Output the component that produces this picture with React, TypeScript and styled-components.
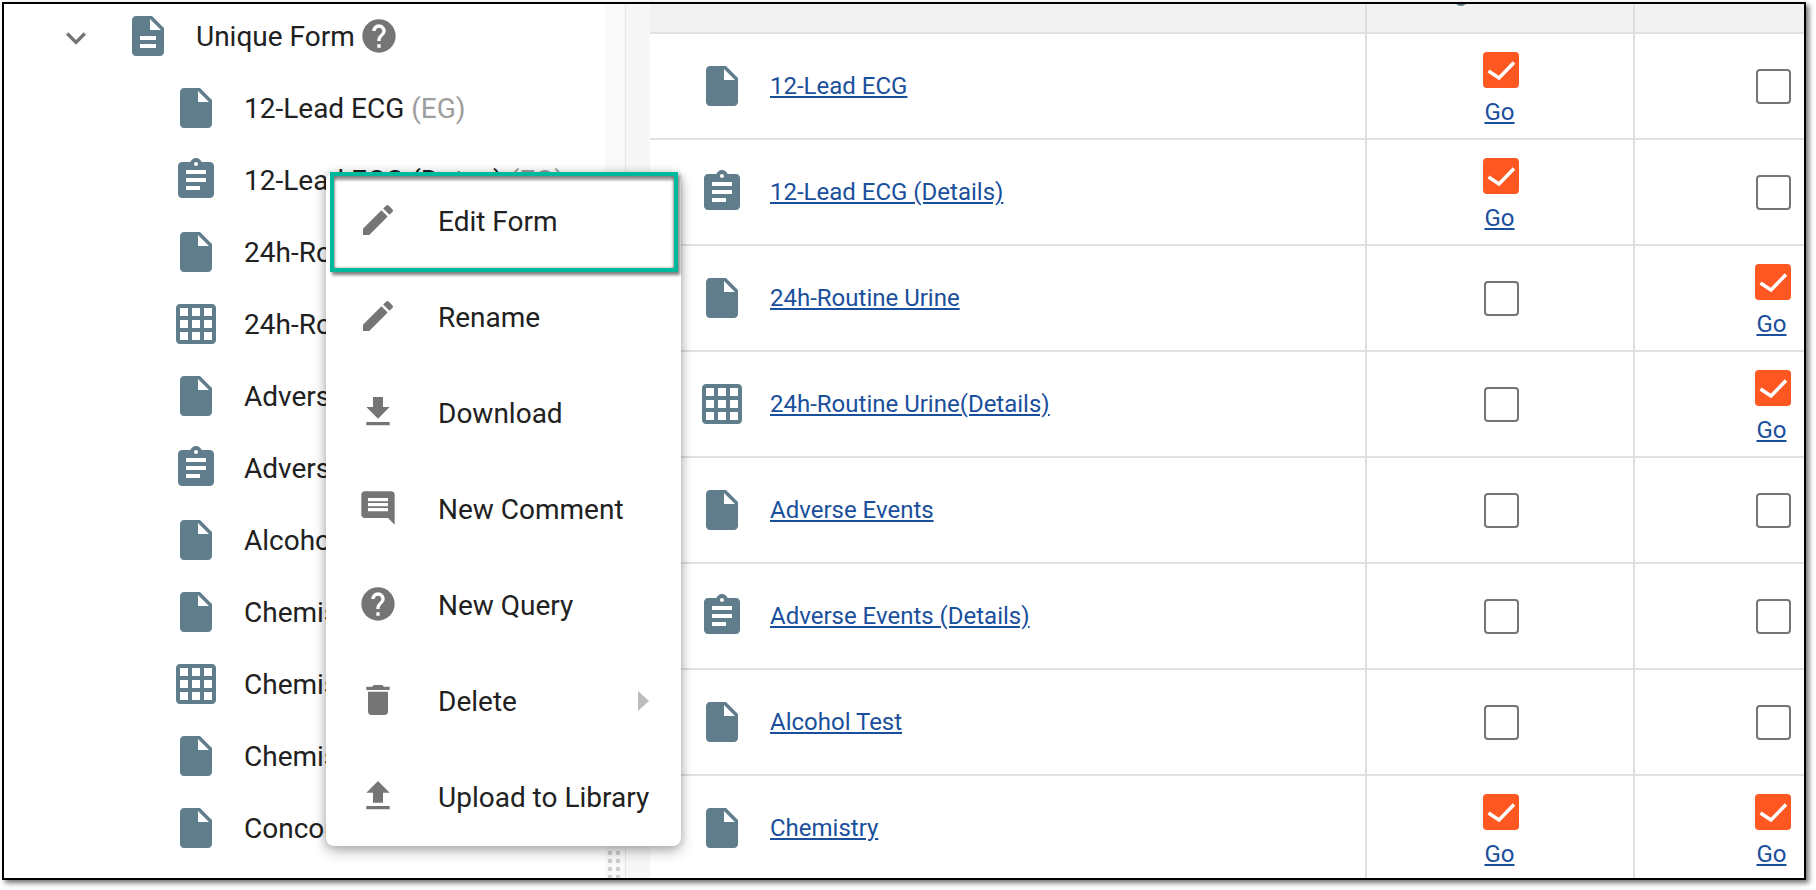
import React from "react";
import styled, { createGlobalStyle } from "styled-components";
import {
  MdAssignment,
  MdComment,
  MdDelete,
  MdDescription,
  MdEdit,
  MdExpandMore,
  MdFileDownload,
  MdFileUpload,
  MdGridOn,
  MdHelp,
  MdInsertDriveFile,
} from "react-icons/md";

const GlobalStyle = createGlobalStyle`
  html, body {
    margin: 0;
    padding: 0;
    background: #fff;
    font-family: Roboto, "Liberation Sans", sans-serif;
    color: #212121;
  }
`;

const Page = styled.div`
  width: 1816px;
  height: 890px;
  padding: 2px;
  box-sizing: border-box;
  overflow: hidden;
`;

const Frame = styled.div`
  position: relative;
  display: flex;
  width: 1804px;
  height: 878px;
  box-sizing: border-box;
  border: 2px solid #000;
  box-shadow: 3px 3px 5px rgba(0, 0, 0, 0.55);
  overflow: hidden;
  background: #fff;
`;

const TreePane = styled.div`
  flex: 0 0 601px;
  display: flex;
  flex-direction: column;
`;

const TreeHeader = styled.div`
  display: flex;
  align-items: center;
  height: 64px;
  margin-bottom: 4px;
  padding-left: 52px;
  flex-shrink: 0;
  font-size: 28px;
`;

const Chevron = styled(MdExpandMore)`
  color: #757575;
  font-size: 40px;
  margin: 4px 28px 0 0;
`;

const TreeLabel = styled.span`
  margin-left: 24px;
  white-space: nowrap;
`;

const HelpBadge = styled(MdHelp)`
  color: #757575;
  font-size: 40px;
  margin-left: 4px;
`;

const TreeRow = styled.div`
  display: flex;
  align-items: center;
  height: 72px;
  flex-shrink: 0;
  padding-left: 168px;
  font-size: 28px;
  white-space: nowrap;
`;

const Code = styled.span`
  color: #9e9e9e;
`;

const FormGlyph = styled.span`
  display: inline-flex;
  flex-shrink: 0;
  color: #607d8b;
  font-size: 48px;
`;

const Handle = styled.div`
  flex: 0 0 21px;
  display: flex;
  align-items: flex-end;
  box-sizing: border-box;
  background: #f9f9f9;
  border-right: 1px solid #e6e6e6;
`;

const Dots = styled.div`
  display: grid;
  grid-template-columns: 4px 4px;
  gap: 4px;
  margin: 0 0 -1px 3px;
`;

const Dot = styled.i`
  width: 4px;
  height: 4px;
  background: #cfcfcf;
`;

const Gutter = styled.div`
  flex: 0 0 24px;
  background: #f7f7f7;
`;

const Table = styled.div`
  flex: 0 0 auto;
  display: grid;
  grid-template-columns: 717px 268px 276px;
  grid-template-rows: 30px repeat(8, 106px);
`;

const HeadCell = styled.div`
  position: relative;
  box-sizing: border-box;
  overflow: hidden;
  background: #f2f2f2;
  border-bottom: 2px solid #e0e0e0;
  border-right: 2px solid #e0e0e0;
`;

const HeadIconTip = styled.span`
  position: absolute;
  top: -12px;
  left: 87px;
  width: 14px;
  height: 14px;
  border-radius: 50%;
  background: #607d8b;
`;

const NameCell = styled.div`
  display: flex;
  align-items: center;
  gap: 24px;
  box-sizing: border-box;
  padding-left: 48px;
  border-bottom: 2px solid #e0e0e0;
  border-right: 2px solid #e0e0e0;
`;

const LinkText = styled.a`
  color: #1a4f9c;
  font-size: 24px;
  text-decoration: underline;
  white-space: nowrap;
`;

const CheckCell = styled.div`
  display: flex;
  align-items: center;
  justify-content: center;
  box-sizing: border-box;
  padding-left: 2px;
  border-bottom: 2px solid #e0e0e0;
  border-right: 2px solid #e0e0e0;
`;

const CheckStack = styled.div`
  display: flex;
  flex-direction: column;
  align-items: center;
  gap: 10px;
  margin-top: 6px;
`;

const GoLink = styled(LinkText)`
  line-height: 28px;
  margin-right: 3px;
`;

const Box = styled.div<{ $checked?: boolean }>`
  box-sizing: border-box;
  width: ${(p) => (p.$checked ? "36px" : "35px")};
  height: ${(p) => (p.$checked ? "36px" : "35px")};
  border-radius: 4px;
  background: ${(p) => (p.$checked ? "#ff5722" : "#fff")};
  border: ${(p) => (p.$checked ? "none" : "2px solid #757575")};
  svg {
    display: block;
  }
`;

const Menu = styled.div`
  position: absolute;
  left: 322px;
  top: 168px;
  width: 355px;
  padding-bottom: 2px;
  background: #fff;
  border-radius: 8px;
  box-shadow: 0 5px 14px rgba(0, 0, 0, 0.28), 0 1px 8px rgba(0, 0, 0, 0.16);
`;

const MenuItem = styled.div`
  display: flex;
  align-items: center;
  height: 96px;
  padding-left: 32px;
  font-size: 28px;
  color: #212121;
  white-space: nowrap;
  svg {
    flex-shrink: 0;
    font-size: 40px;
    color: #757575;
    margin-right: 40px;
  }
`;

const MenuLabel = styled.span`
  margin-top: 2px;
`;

const Caret = styled.span`
  width: 0;
  height: 0;
  margin: 2px 32px 0 auto;
  border-left: 11px solid #bdbdbd;
  border-top: 10px solid transparent;
  border-bottom: 10px solid transparent;
`;

const Highlight = styled.div`
  position: absolute;
  left: 326px;
  top: 168px;
  width: 348px;
  height: 100px;
  box-sizing: border-box;
  border: 4px solid #00b89c;
  box-shadow: 2px 3px 3px rgba(0, 0, 0, 0.5), inset 0 4px 3px rgba(0, 0, 0, 0.4),
    inset -1px 0 3px rgba(0, 0, 0, 0.2), inset 1px 0 3px rgba(0, 0, 0, 0.2);
`;

type Kind = "file" | "clip" | "grid";

const glyphs: Record<Kind, React.ReactNode> = {
  file: <MdInsertDriveFile />,
  clip: <MdAssignment />,
  grid: <MdGridOn />,
};

const treeRows: { kind: Kind; name: string; code: string }[] = [
  { kind: "file", name: "12-Lead ECG", code: "(EG)" },
  { kind: "clip", name: "12-Lead ECG (Dates)", code: "(EG)" },
  { kind: "file", name: "24h-Routine Urine", code: "" },
  { kind: "grid", name: "24h-Routine Urine(Details)", code: "" },
  { kind: "file", name: "Adverse Events", code: "" },
  { kind: "clip", name: "Adverse Events (Details)", code: "" },
  { kind: "file", name: "Alcohol Test", code: "" },
  { kind: "file", name: "Chemistry", code: "" },
  { kind: "grid", name: "Chemistry(Details)", code: "" },
  { kind: "file", name: "Chemistry 2", code: "" },
  { kind: "file", name: "Concomitant Medications", code: "" },
];

const tableRows: { kind: Kind; name: string; a: boolean; b: boolean }[] = [
  { kind: "file", name: "12-Lead ECG", a: true, b: false },
  { kind: "clip", name: "12-Lead ECG (Details)", a: true, b: false },
  { kind: "file", name: "24h-Routine Urine", a: false, b: true },
  { kind: "grid", name: "24h-Routine Urine(Details)", a: false, b: true },
  { kind: "file", name: "Adverse Events", a: false, b: false },
  { kind: "clip", name: "Adverse Events (Details)", a: false, b: false },
  { kind: "file", name: "Alcohol Test", a: false, b: false },
  { kind: "file", name: "Chemistry", a: true, b: true },
];

function Check({ on }: { on: boolean }) {
  if (!on) {
    return <Box />;
  }
  return (
    <CheckStack>
      <Box $checked>
        <svg width="36" height="36" viewBox="0 0 36 36">
          <path d="M5.5 19 L16 26 L31 10.5" fill="none" stroke="#fff" strokeWidth="3.5" />
        </svg>
      </Box>
      <GoLink>Go</GoLink>
    </CheckStack>
  );
}

export default function App() {
  return (
    <>
      <GlobalStyle />
      <Page>
        <Frame>
          <TreePane>
            <TreeHeader>
              <Chevron />
              <FormGlyph>
                <MdDescription />
              </FormGlyph>
              <TreeLabel>Unique Form</TreeLabel>
              <HelpBadge />
            </TreeHeader>
            {treeRows.map((r) => (
              <TreeRow key={r.name}>
                <FormGlyph>{glyphs[r.kind]}</FormGlyph>
                <TreeLabel>
                  {r.name} {r.code && <Code>{r.code}</Code>}
                </TreeLabel>
              </TreeRow>
            ))}
          </TreePane>
          <Handle>
            <Dots>
              {Array.from({ length: 8 }).map((_, i) => (
                <Dot key={i} />
              ))}
            </Dots>
          </Handle>
          <Gutter />
          <Table>
            <HeadCell />
            <HeadCell>
              <HeadIconTip />
            </HeadCell>
            <HeadCell />
            {tableRows.map((r) => (
              <React.Fragment key={r.name}>
                <NameCell>
                  <FormGlyph>{glyphs[r.kind]}</FormGlyph>
                  <LinkText>{r.name}</LinkText>
                </NameCell>
                <CheckCell>
                  <Check on={r.a} />
                </CheckCell>
                <CheckCell>
                  <Check on={r.b} />
                </CheckCell>
              </React.Fragment>
            ))}
          </Table>
          <Menu>
            <MenuItem><MdEdit /><MenuLabel>Edit Form</MenuLabel></MenuItem>
            <MenuItem><MdEdit /><MenuLabel>Rename</MenuLabel></MenuItem>
            <MenuItem><MdFileDownload /><MenuLabel>Download</MenuLabel></MenuItem>
            <MenuItem><MdComment /><MenuLabel>New Comment</MenuLabel></MenuItem>
            <MenuItem><MdHelp /><MenuLabel>New Query</MenuLabel></MenuItem>
            <MenuItem><MdDelete /><MenuLabel>Delete</MenuLabel><Caret /></MenuItem>
            <MenuItem><MdFileUpload /><MenuLabel>Upload to Library</MenuLabel></MenuItem>
          </Menu>
          <Highlight />
        </Frame>
      </Page>
    </>
  );
}
